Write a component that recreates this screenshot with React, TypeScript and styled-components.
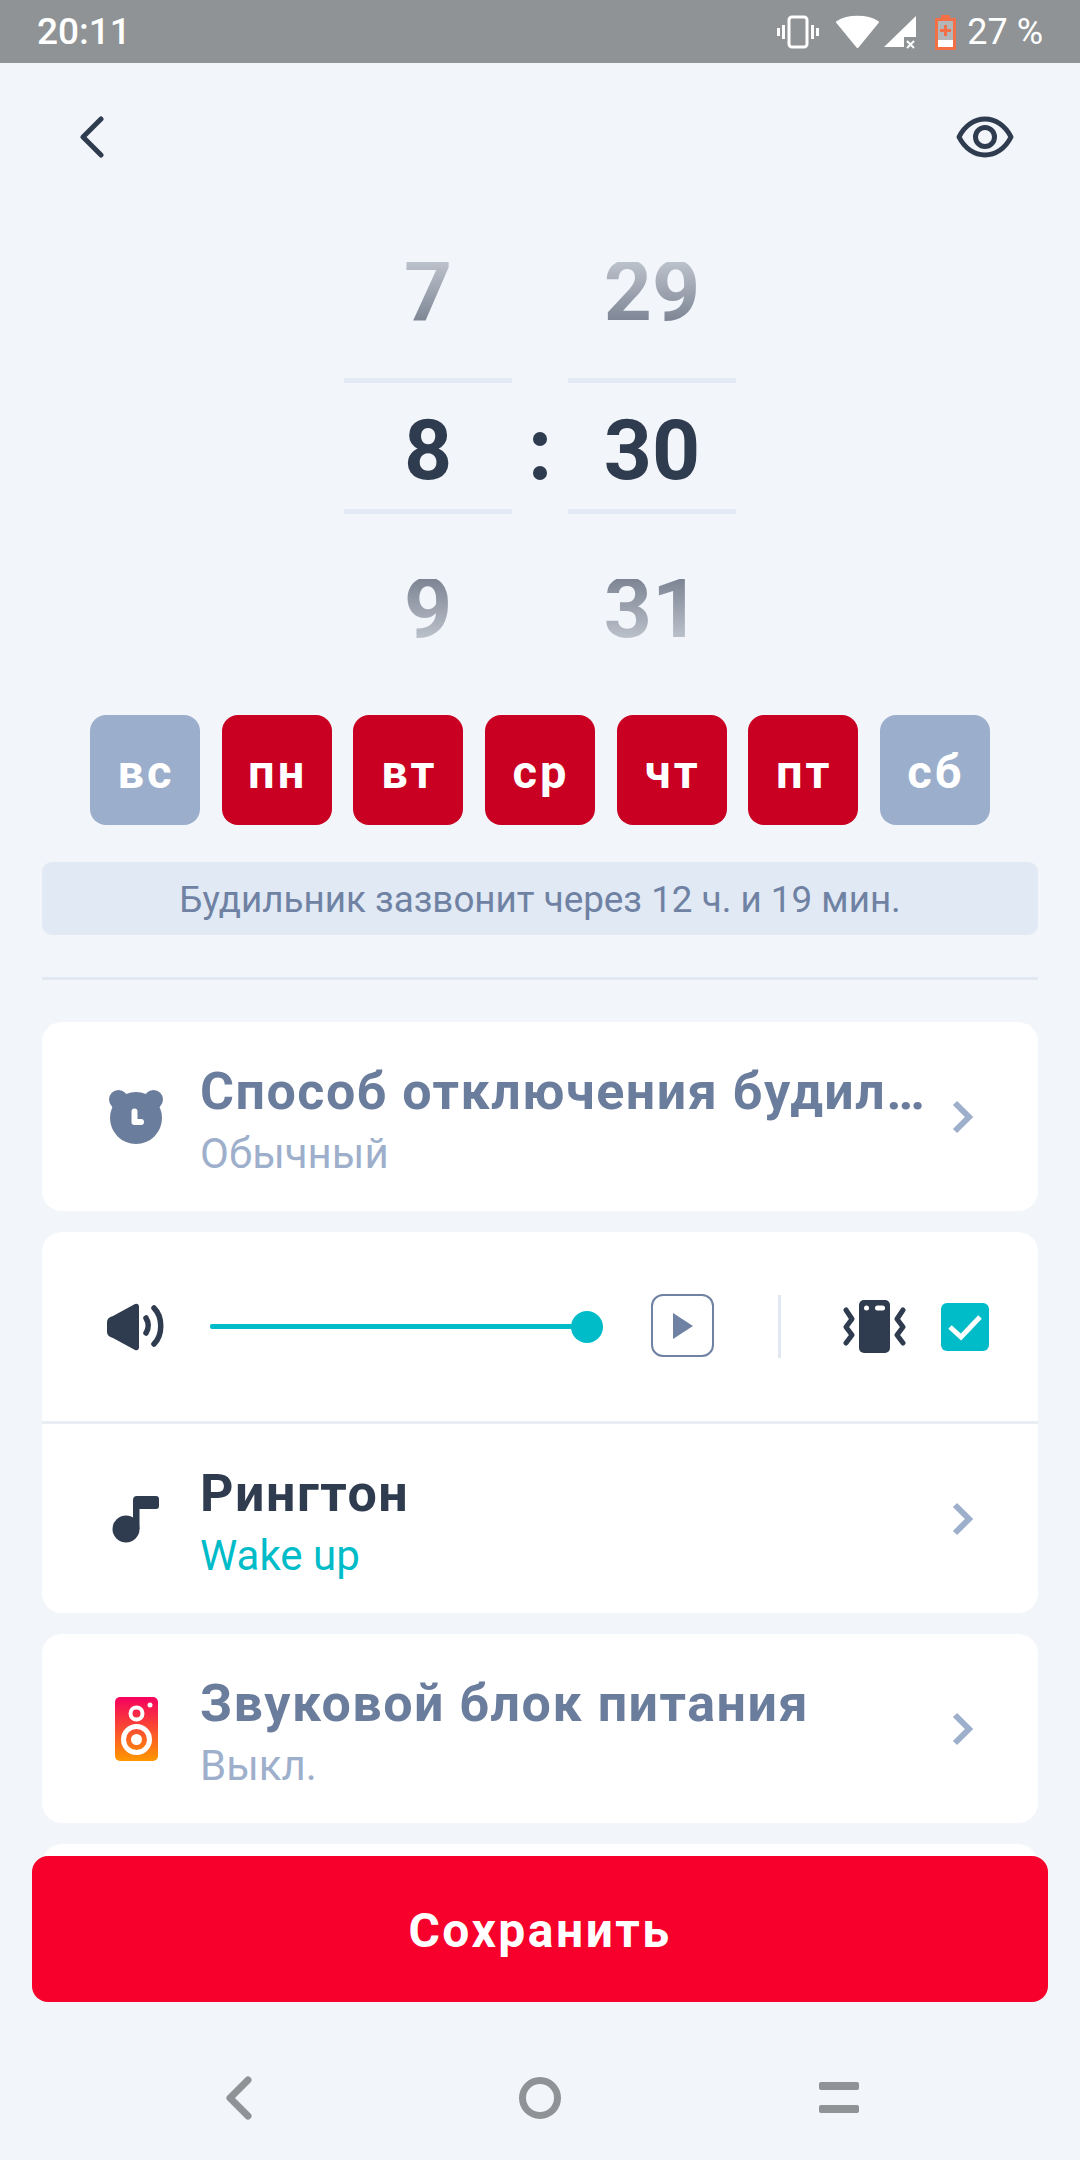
import React from "react";
import styled, { createGlobalStyle } from "styled-components";

const Global = createGlobalStyle`
  html, body { margin: 0; padding: 0; background: #f2f5fa; }
  * { box-sizing: border-box; }
`;

const Page = styled.div`
  position: relative;
  width: 1080px;
  height: 2160px;
  overflow: hidden;
  background: #f2f5fa;
  font-family: Roboto, "Noto Sans", sans-serif;
  display: flex;
  flex-direction: column;
`;

const StatusBar = styled.div`
  height: 63px;
  flex: none;
  background: #8f9395;
  color: #fff;
  display: flex;
  align-items: center;
  padding: 0 37px;
  font-size: 37px;
  font-weight: 500;
`;
const StatusTime = styled.span`
  flex: 1;
`;
const StatusIcons = styled.div`
  display: flex;
  align-items: center;
`;
const Percent = styled.span`
  margin-left: 11px;
  font-size: 36px;
  font-weight: 400;
`;

const Header = styled.div`
  height: 157px;
  flex: none;
  display: flex;
  justify-content: space-between;
  align-items: flex-start;
  padding: 53px 66px 0 79px;
`;

const Picker = styled.div`
  display: flex;
  justify-content: center;
  align-items: stretch;
  height: 452px;
  flex: none;
`;
const Column = styled.div`
  width: 168px;
  display: flex;
  flex-direction: column;
`;
const SideCell = styled.div<{ $pos: "top" | "bottom" }>`
  height: 158px;
  display: flex;
  align-items: center;
  justify-content: center;
  padding: ${(p) => (p.$pos === "top" ? "0 0 14px" : "31px 0 0")};
`;
const SideDigit = styled.span<{ $pos: "top" | "bottom" }>`
  font-size: 84px;
  line-height: 60px;
  font-weight: 700;
  color: transparent;
  background: linear-gradient(
    ${(p) => (p.$pos === "top" ? "180deg" : "0deg")},
    #bcc2cb,
    #7d8594
  );
  -webkit-background-clip: text;
  background-clip: text;
`;
const CenterCell = styled.div`
  height: 136px;
  border-top: 5px solid #e3eaf5;
  border-bottom: 5px solid #e3eaf5;
  display: flex;
  align-items: center;
  justify-content: center;
  padding-top: 8px;
  font-size: 84px;
  font-weight: 700;
  color: #2f3b4e;
`;
const Colon = styled.div`
  width: 56px;
  display: flex;
  flex-direction: column;
  align-items: center;
  gap: 20px;
  padding-top: 212px;
`;
const Dot = styled.span`
  width: 14px;
  height: 14px;
  border-radius: 50%;
  background: #2f3b4e;
`;

const Days = styled.div`
  flex: none;
  display: flex;
  justify-content: center;
  gap: 21.67px;
  margin-top: 43px;
`;
const Day = styled.div<{ $on?: boolean }>`
  width: 110px;
  height: 110px;
  border-radius: 16px;
  background: ${(p) => (p.$on ? "#c90022" : "#9bafcc")};
  color: #fff;
  font-size: 47px;
  font-weight: 700;
  letter-spacing: 3px;
  padding: 2px 0 0 2px;
  display: flex;
  align-items: center;
  justify-content: center;
`;

const Notice = styled.div`
  flex: none;
  margin: 37px 42px 0;
  height: 73px;
  border-radius: 10px;
  background: #e1e9f4;
  color: #6f82a3;
  font-size: 36.8px;
  padding-top: 1px;
  display: flex;
  align-items: center;
  justify-content: center;
`;

const Rule = styled.div`
  flex: none;
  margin: 42px 42px 0;
  height: 3px;
  background: #e2e8f1;
`;

const Cards = styled.div`
  flex: none;
  margin: 42px 42px 0;
  display: flex;
  flex-direction: column;
  gap: 21px;
`;
const Card = styled.div`
  background: #fff;
  border-radius: 20px;
  overflow: hidden;
`;
const Row = styled.div`
  height: 189px;
  display: flex;
  align-items: center;
  padding: 0 62px 0 62px;
`;
const IconSlot = styled.div`
  width: 64px;
  flex: none;
  margin-right: 32px;
  display: flex;
  justify-content: center;
`;
const RowText = styled.div`
  flex: 1;
  min-width: 0;
  padding-right: 20px;
`;
const Title = styled.div<{ $active?: boolean }>`
  font-size: 52px;
  line-height: 75px;
  font-weight: 700;
  letter-spacing: 1.5px;
  color: ${(p) => (p.$active ? "#2f3b4e" : "#6b7d9c")};
  white-space: nowrap;
`;
const Sub = styled.div<{ $accent?: boolean }>`
  font-size: 42px;
  line-height: 50px;
  color: ${(p) => (p.$accent ? "#00bcc8" : "#9eafcc")};
`;
const Controls = styled.div`
  height: 192px;
  display: flex;
  align-items: center;
  padding-left: 65px;
  border-bottom: 3px solid #e9eef5;
`;
const Slider = styled.div`
  position: relative;
  width: 377px;
  height: 5px;
  margin-left: 45px;
  background: #00bcc8;
  border-radius: 2px;
`;
const Knob = styled.span`
  position: absolute;
  right: -16px;
  top: -13.5px;
  width: 32px;
  height: 32px;
  border-radius: 50%;
  background: #00bcc8;
`;
const PlayBox = styled.div`
  margin: -2px 0 0 64px;
  width: 63px;
  height: 63px;
  border: 2.5px solid #6f82a3;
  border-radius: 12px;
  display: flex;
  align-items: center;
  justify-content: center;
`;
const VLine = styled.div`
  width: 3px;
  height: 63px;
  margin-left: 64px;
  background: #e2e8f1;
`;
const PhoneWrap = styled.div`
  margin-left: 62px;
  display: flex;
`;
const Check = styled.div`
  margin-left: 35px;
  width: 48px;
  height: 48px;
  border-radius: 6px;
  background: #00bcc8;
  display: flex;
  align-items: center;
  justify-content: center;
`;

const Footer = styled.div`
  position: absolute;
  left: 0;
  right: 0;
  top: 1856px;
  bottom: 0;
  background: #f2f5fa;
  display: flex;
  flex-direction: column;
  align-items: center;
`;
const SaveButton = styled.div`
  width: 1016px;
  height: 146px;
  border-radius: 16px;
  background: #f7002b;
  color: #fff;
  font-size: 48px;
  font-weight: 700;
  letter-spacing: 2.5px;
  padding-top: 2px;
  display: flex;
  align-items: center;
  justify-content: center;
`;
const NavBar = styled.div`
  margin-top: 74px;
  width: 638px;
  display: grid;
  grid-template-columns: 1fr auto 1fr;
  align-items: center;
`;
const NavBack = styled.div`
  justify-self: start;
  margin-left: 3px;
  display: flex;
`;
const NavMenu = styled.div`
  justify-self: end;
  display: flex;
`;

const Chevron = () => (
  <svg width="24" height="34" viewBox="0 0 24 34" fill="none" style={{ flex: "none" }}>
    <path d="M3 3l14 14L3 31" stroke="#9eafcc" strokeWidth="6" />
  </svg>
);

const Bear = () => (
  <svg width="54" height="54" viewBox="0 0 54 54">
    <circle cx="9.500" cy="9.500" r="9.500" fill="#6b7d9c" />
    <circle cx="44.500" cy="9.500" r="9.500" fill="#6b7d9c" />
    <circle cx="27" cy="28" r="26" fill="#6b7d9c" />
    <path d="M25.500 21.500v10.500h6.500" stroke="#fff" strokeWidth="6" strokeLinecap="round" strokeLinejoin="round" fill="none" />
  </svg>
);

const Note = () => (
  <svg width="48" height="48" viewBox="0 0 48 48">
    <circle cx="14" cy="34" r="13.500" fill="#2f3b4e" />
    <path d="M21 34V5a4 4 0 0 1 4-4h19a3 3 0 0 1 3 3v7a3 3 0 0 1-3 3H27.500v20z" fill="#2f3b4e" />
  </svg>
);

const SpeakerApp = () => (
  <svg width="43" height="64" viewBox="0 0 43 64">
    <defs>
      <linearGradient id="sp" x1="0" y1="0" x2="0" y2="1">
        <stop offset="0" stopColor="#f5005f" />
        <stop offset="1" stopColor="#ff9800" />
      </linearGradient>
    </defs>
    <rect width="43" height="64" rx="5" fill="url(#sp)" />
    <circle cx="21.500" cy="16.500" r="6" fill="none" stroke="#fff" strokeWidth="4" />
    <circle cx="35" cy="8" r="2.500" fill="#fff" />
    <circle cx="21.500" cy="42.500" r="13" fill="none" stroke="#fff" strokeWidth="5" />
    <circle cx="21.500" cy="42.500" r="5.500" fill="#fff" />
  </svg>
);

const Volume = () => (
  <svg width="58" height="52" viewBox="0 0 58 52" fill="none">
    <path d="M6 15L28 3a3 3 0 0 1 4 2v42a3 3 0 0 1-4 2L6 37C2 36 0 34 0 31V21c0-3 2-5 6-6z" fill="#2f3b4e" />
    <path d="M39 17c3 5 3 10 0 15" stroke="#2f3b4e" strokeWidth="5.500" strokeLinecap="round" />
    <path d="M47 7c9 9 9 27 0 36" stroke="#2f3b4e" strokeWidth="5.500" strokeLinecap="round" />
  </svg>
);

const Phone = () => (
  <svg width="63" height="53" viewBox="0 0 63 53" fill="none">
    <rect x="16" y="0" width="31" height="53" rx="5" fill="#2f3b4e" />
    <circle cx="23.500" cy="8" r="2.500" fill="#fff" />
    <rect x="32" y="5.500" width="10" height="5" rx="2.500" fill="#fff" />
    <path d="M3 10l6 9-6 8 6 8-6 8" stroke="#2f3b4e" strokeWidth="5" strokeLinecap="round" strokeLinejoin="round" />
    <path d="M60 10l-6 9 6 8-6 8 6 8" stroke="#2f3b4e" strokeWidth="5" strokeLinecap="round" strokeLinejoin="round" />
  </svg>
);

export default function App() {
  return (
    <Page>
      <Global />
      <StatusBar>
        <StatusTime>20:11</StatusTime>
        <StatusIcons>
          <svg width="140" height="36" viewBox="0 0 140 36" fill="none">
            <rect x="12" y="3" width="18" height="30" rx="3" stroke="#fff" strokeWidth="3" />
            <path d="M6.500 11v14M1.500 14v8M35.500 11v14M40.500 14v8" stroke="#fff" strokeWidth="3" />
            <path d="M60 8c11-7 30-7 41 0L80.500 33z" fill="#fff" stroke="#fff" strokeWidth="2" strokeLinejoin="round" />
            <path d="M107 33L139 2v21h-12v10z" fill="#fff" />
            <path d="M130 27l7 7M137 27l-7 7" stroke="#fff" strokeWidth="2" />
          </svg>
          <svg width="21" height="36" viewBox="0 0 21 36" style={{ marginLeft: 18 }}>
            <path d="M6 1h9v3h5a1 1 0 0 1 1 1v30a1 1 0 0 1-1 1H1a1 1 0 0 1-1-1V5a1 1 0 0 1 1-1h5z" fill="#f37046" />
            <rect x="3" y="7" width="15" height="19" fill="#b3b5b6" />
            <rect x="3" y="26" width="15" height="7" fill="#fff" />
            <path d="M10.500 11v11M5 16.500h11" stroke="#f37046" strokeWidth="3" />
          </svg>
          <Percent>27 %</Percent>
        </StatusIcons>
      </StatusBar>
      <Header>
        <svg width="26" height="42" viewBox="0 0 26 42" fill="none">
          <path d="M22 3L4 21l18 18" stroke="#2f3b4e" strokeWidth="5" strokeLinecap="round" strokeLinejoin="round" />
        </svg>
        <svg width="58" height="42" viewBox="0 0 58 42" fill="none">
          <path d="M3 21C9 9 19 3 29 3s20 6 26 18c-6 12-16 18-26 18S9 33 3 21z" stroke="#2f3b4e" strokeWidth="5" strokeLinejoin="round" />
          <circle cx="29" cy="21" r="9.500" stroke="#2f3b4e" strokeWidth="5" />
        </svg>
      </Header>
      <Picker>
        <Column>
          <SideCell $pos="top"><SideDigit $pos="top">7</SideDigit></SideCell>
          <CenterCell>8</CenterCell>
          <SideCell $pos="bottom"><SideDigit $pos="bottom">9</SideDigit></SideCell>
        </Column>
        <Colon><Dot /><Dot /></Colon>
        <Column>
          <SideCell $pos="top"><SideDigit $pos="top">29</SideDigit></SideCell>
          <CenterCell>30</CenterCell>
          <SideCell $pos="bottom"><SideDigit $pos="bottom">31</SideDigit></SideCell>
        </Column>
      </Picker>
      <Days>
        <Day>вс</Day>
        <Day $on>пн</Day>
        <Day $on>вт</Day>
        <Day $on>ср</Day>
        <Day $on>чт</Day>
        <Day $on>пт</Day>
        <Day>сб</Day>
      </Days>
      <Notice>Будильник зазвонит через 12 ч. и 19 мин.</Notice>
      <Rule />
      <Cards>
        <Card>
          <Row>
            <IconSlot><Bear /></IconSlot>
            <RowText>
              <Title>Способ отключения будил…</Title>
              <Sub>Обычный</Sub>
            </RowText>
            <Chevron />
          </Row>
        </Card>
        <Card>
          <Controls>
            <Volume />
            <Slider><Knob /></Slider>
            <PlayBox>
              <svg width="20" height="26" viewBox="0 0 20 26"><path d="M0 0l20 13L0 26z" fill="#6f82a3" /></svg>
            </PlayBox>
            <VLine />
            <PhoneWrap><Phone /></PhoneWrap>
            <Check>
              <svg width="36" height="28" viewBox="0 0 36 28" fill="none"><path d="M3 14l11 10L33 4" stroke="#fff" strokeWidth="5" /></svg>
            </Check>
          </Controls>
          <Row>
            <IconSlot><Note /></IconSlot>
            <RowText>
              <Title $active>Рингтон</Title>
              <Sub $accent>Wake up</Sub>
            </RowText>
            <Chevron />
          </Row>
        </Card>
        <Card>
          <Row>
            <IconSlot><SpeakerApp /></IconSlot>
            <RowText>
              <Title>Звуковой блок питания</Title>
              <Sub>Выкл.</Sub>
            </RowText>
            <Chevron />
          </Row>
        </Card>
        <Card>
          <Row />
        </Card>
      </Cards>
      <Footer>
        <SaveButton>Сохранить</SaveButton>
        <NavBar>
          <NavBack>
            <svg width="28" height="44" viewBox="0 0 28 44" fill="none">
              <path d="M24 4L6 22l18 18" stroke="#8f9395" strokeWidth="7" strokeLinejoin="round" strokeLinecap="round" />
            </svg>
          </NavBack>
          <svg width="42" height="44" viewBox="0 0 42 44" fill="none">
            <circle cx="21" cy="22" r="17.500" stroke="#8f9395" strokeWidth="7" />
          </svg>
          <NavMenu>
            <svg width="40" height="32" viewBox="0 0 40 32">
              <rect width="40" height="8" rx="2" fill="#8f9395" />
              <rect y="23" width="40" height="8" rx="2" fill="#8f9395" />
            </svg>
          </NavMenu>
        </NavBar>
      </Footer>
    </Page>
  );
}
